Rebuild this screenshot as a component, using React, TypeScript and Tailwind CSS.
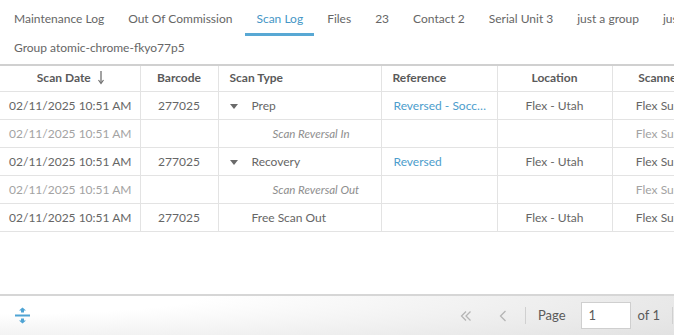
import React from "react";

const tabs = [
  "Maintenance Log",
  "Out Of Commission",
  "Scan Log",
  "Files",
  "23",
  "Contact 2",
  "Serial Unit 3",
  "just a group",
  "just a group 2",
];

function Caret() {
  return (
    <svg width="8" height="5" viewBox="0 0 8 5" className="inline-block">
      <path d="M0 0 L8 0 L4 5 Z" fill="#6a6a6a" />
    </svg>
  );
}

function SortArrow() {
  return (
    <svg width="8" height="14" viewBox="0 0 8 14" className="inline-block ml-[6px] -mt-[2px]">
      <path d="M4 0 V12" stroke="#707070" strokeWidth="1.3" />
      <path d="M1.5 9 L4 12.5 L6.5 9" stroke="#707070" strokeWidth="1.2" fill="none" />
    </svg>
  );
}

type Row = {
  date: string;
  barcode: string;
  type: string;
  caret?: boolean;
  sub?: boolean;
  ref?: string;
  loc?: string;
  scanner: string;
};

const rows: Row[] = [
  { date: "02/11/2025 10:51 AM", barcode: "277025", type: "Prep", caret: true, ref: "Reversed - Soccer Ball", loc: "Flex - Utah", scanner: "Flex Support" },
  { date: "02/11/2025 10:51 AM", barcode: "", type: "Scan Reversal In", sub: true, scanner: "Flex Support" },
  { date: "02/11/2025 10:51 AM", barcode: "277025", type: "Recovery", caret: true, ref: "Reversed", loc: "Flex - Utah", scanner: "Flex Support" },
  { date: "02/11/2025 10:51 AM", barcode: "", type: "Scan Reversal Out", sub: true, scanner: "Flex Support" },
  { date: "02/11/2025 10:51 AM", barcode: "277025", type: "Free Scan Out", loc: "Flex - Utah", scanner: "Flex Support" },
];

export default function App() {
  const font = { fontFamily: "Lato, 'Open Sans', sans-serif" };
  return (
    <div className="w-[674px] h-[335px] bg-white flex flex-col overflow-hidden text-[12px] text-[#666]" style={font}>
      {/* Tabs */}
      <div className="h-[38px] flex items-stretch pl-[2px] whitespace-nowrap overflow-hidden">
        {tabs.map((t) => (
          <div key={t} className={`relative px-[12px] flex items-center pb-[1px] ${t === "Scan Log" ? "text-[#4596c6]" : "text-[#666]"}`}>
            {t}
            {t === "Scan Log" && <span className="absolute left-[1px] right-[1px] top-[33px] h-[3px] bg-[#58a8d4]" />}
          </div>
        ))}
      </div>
      <div className="h-[26px] flex items-center pl-[14px] pb-[6px] text-[#666]">Group atomic-chrome-fkyo77p5</div>

      {/* Table */}
      <div className="border-t-2 border-[#d0d0d0] flex-1 overflow-hidden">
        <table className="table-fixed border-collapse w-[726px]">
          <colgroup>
            <col className="w-[140px]" />
            <col className="w-[78px]" />
            <col className="w-[163px]" />
            <col className="w-[116px]" />
            <col className="w-[115px]" />
            <col className="w-[114px]" />
          </colgroup>
          <thead>
            <tr className="h-[25px] border-b border-[#e3e3e3] text-[#5a5a5a]">
              <th className="text-center font-bold border-r border-[#e3e3e3] pl-[2px]">
                Scan Date<SortArrow />
              </th>
              <th className="text-center font-bold border-r border-[#e3e3e3]">Barcode</th>
              <th className="text-left font-bold border-r border-[#e3e3e3] pl-[11px]">Scan Type</th>
              <th className="text-left font-bold border-r border-[#e3e3e3] pl-[11px]">Reference</th>
              <th className="text-center font-bold border-r border-[#e3e3e3]">Location</th>
              <th className="text-center font-bold whitespace-nowrap">Scanned By</th>
            </tr>
          </thead>
          <tbody>
            {rows.map((r, i) => (
              <tr key={i} className={`h-[28px] border-b border-[#e3e3e3] ${r.sub ? "text-[#a3a3a3]" : "text-[#666]"}`}>
                <td className="text-center border-r border-[#e3e3e3] pl-[1px] pt-[2px]">{r.date}</td>
                <td className="text-center border-r border-[#e3e3e3] pt-[2px]">{r.barcode}</td>
                <td className="border-r border-[#e3e3e3] whitespace-nowrap pt-[2px]">
                  {r.sub ? (
                    <span className="pl-[54px] italic text-[11.5px] text-[#8e8e8e]">{r.type}</span>
                  ) : (
                    <span className="flex items-center">
                      <span className="w-[33px] pl-[11px] flex items-center">{r.caret && <Caret />}</span>
                      <span>{r.type}</span>
                    </span>
                  )}
                </td>
                <td className="border-r border-[#e3e3e3] pl-[12px] pr-[10px] pt-[2px] text-[#4c9dcc] truncate">{r.ref}</td>
                <td className="text-center border-r border-[#e3e3e3] pt-[2px]">{r.loc}</td>
                <td className="text-center whitespace-nowrap pt-[2px]">{r.scanner}</td>
              </tr>
            ))}
          </tbody>
        </table>
      </div>

      {/* Footer */}
      <div className="h-[41px] border-t-2 border-[#d6d6d6] flex items-center bg-[radial-gradient(ellipse_120%_180%_at_0%_0%,#ffffff_25%,#e2e2e2_100%)]">
        <div className="pl-[15px] flex items-center">
          <svg width="15" height="17" viewBox="0 0 15 17">
            <rect x="0" y="7.5" width="15" height="2" fill="#4fa4d4" />
            <path d="M7.5 0.5 L11 3.5 L9 3.5 L9 5.5 L6 5.5 L6 3.5 L4 3.5 Z" fill="#4fa4d4" />
            <path d="M7.5 16.5 L11 13.5 L9 13.5 L9 11.5 L6 11.5 L6 13.5 L4 13.5 Z" fill="#4fa4d4" />
          </svg>
        </div>
        <div className="ml-auto flex items-center h-full text-[13px]">
          <svg width="12" height="12" viewBox="0 0 12 12" className="mr-[27px]">
            <path d="M6 1.5 L1.5 6 L6 10.5 M10.5 1.5 L6 6 L10.5 10.5" stroke="#b5b5b5" strokeWidth="1.3" fill="none" />
          </svg>
          <svg width="8" height="12" viewBox="0 0 8 12" className="mr-[18px]">
            <path d="M6.5 1 L1.5 6 L6.5 11" stroke="#b5b5b5" strokeWidth="1.3" fill="none" />
          </svg>
          <div className="w-px h-[17px] bg-[#d0d0d0] mr-[12px]" />
          <span className="text-[#5a5a5a] mr-[15px]">Page</span>
          <div className="w-[50px] h-[27px] border border-[#cfcfcf] bg-white flex items-center pl-[7px] text-[#5a5a5a] mr-[7px]">1</div>
          <span className="text-[#5a5a5a] mr-[12px]">of 1</span>
          <div className="w-px h-[17px] bg-[#d0d0d0] mr-[1px]" />
        </div>
      </div>
    </div>
  );
}
